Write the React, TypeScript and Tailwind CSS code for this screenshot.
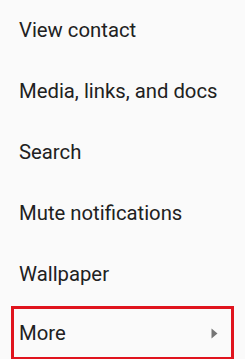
import React from 'react'

const items = ['View contact', 'Media, links, and docs', 'Search', 'Mute notifications', 'Wallpaper']

export default function App() {
  return (
    <div className="w-[245px] h-[359px] bg-[#fafafa] overflow-hidden" style={{ fontFamily: 'Roboto, sans-serif' }}>
      <ul className="flex flex-col">
        {items.map((label) => (
          <li key={label} className="h-[61px] flex items-center pl-[19px] text-[20.3px] text-[#212121]">
            {label}
          </li>
        ))}
        <li className="mx-[11px] mt-[1px] h-[54px] border-[3px] border-[#e0141e] flex items-center justify-between pl-[5px] pr-[13px] text-[20.3px] text-[#212121]">
          <span>More</span>
          <svg width="7" height="11" viewBox="0 0 7 11">
            <path d="M0.5 0.5 L6.5 5.5 L0.5 10.5 Z" fill="#757575" />
          </svg>
        </li>
      </ul>
    </div>
  )
}
